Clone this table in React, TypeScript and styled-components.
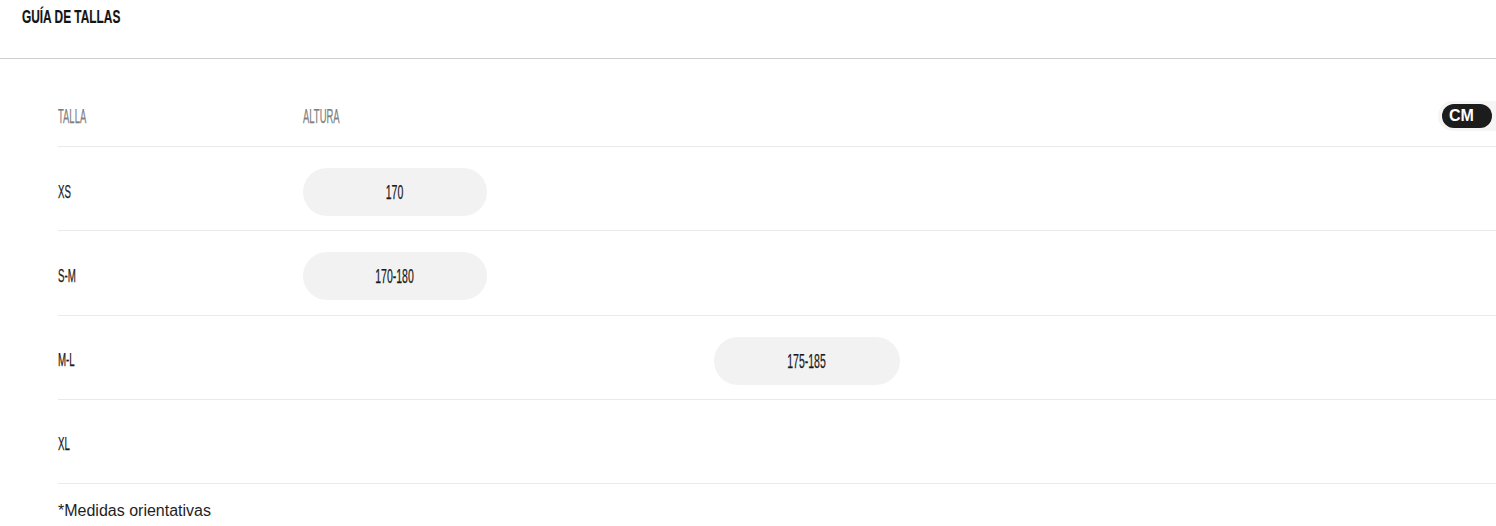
import styled, { createGlobalStyle } from 'styled-components'

const GlobalStyle = createGlobalStyle`
  html, body {
    margin: 0;
    padding: 0;
    background: #ffffff;
  }
  body {
    font-family: "Liberation Sans", Arial, sans-serif;
    color: #1a1a1a;
  }
`

const Page = styled.div`
  width: 1496px;
  display: flex;
  flex-direction: column;
`

const Header = styled.div`
  height: 59px;
  box-sizing: border-box;
  padding: 4px 22px 0;
  border-bottom: 1px solid #cfcfcf;
  display: flex;
  align-items: flex-start;
`

// condensed display face, squeezed from the narrow sans
const Cond = styled.span<{ $origin?: 'left' | 'center'; $scale?: number }>`
  display: inline-block;
  font-family: "Liberation Sans Narrow", "Liberation Sans", Arial, sans-serif;
  white-space: nowrap;
  -webkit-text-stroke: 0.25px currentColor;
  transform: scaleX(${p => p.$scale ?? 0.5});
  transform-origin: ${p => p.$origin ?? 'left'} center;
`

const Title = styled(Cond)`
  font-size: 18px;
  font-weight: 700;
  color: #141414;
  line-height: 26px;
  -webkit-text-stroke: 0.2px currentColor;
`

const Table = styled.div`
  margin-left: 58px;
  padding-top: 33px;
  display: flex;
  flex-direction: column;
`

const Row = styled.div<{ $head?: boolean }>`
  display: grid;
  grid-template-columns: 245px repeat(5, 205.5px) 1fr;
  align-items: center;
  border-bottom: 1px solid #e9e9e9;
  padding: ${p => (p.$head ? '0 0 6px' : '21px 0 14.3px')};
  min-height: 48px;
`

const HeadLabel = styled(Cond)`
  font-size: 21px;
  color: #7e7e7e;
`

const SizeLabel = styled(Cond)`
  font-size: 18px;
  color: #1a1a1a;
`

const Pill = styled.div<{ $col: number; $w?: number }>`
  grid-column: ${p => p.$col + 2} / span 1;
  grid-row: 1;
  width: ${p => p.$w ?? 184}px;
  height: 48px;
  border-radius: 24px;
  background: #f2f2f2;
  display: flex;
  align-items: center;
  justify-content: center;
`

const PillText = styled(Cond)`
  font-size: 21px;
  color: #1a1a1a;
`

const UnitCell = styled.div`
  grid-column: 7;
  grid-row: 1;
  justify-self: end;
`

const UnitToggle = styled.div`
  display: flex;
  background: #f5f5f5;
  border-radius: 16px 0 0 16px;
  padding: 3px 4px 3px 4px;
`

const UnitOption = styled.div<{ $active?: boolean }>`
  height: 24px;
  width: 50px;
  box-sizing: border-box;
  padding-left: 7px;
  border-radius: 12px;
  display: flex;
  align-items: center;
  font-family: "Liberation Sans", Arial, sans-serif;
  font-weight: 700;
  font-size: 16px;
  background: ${p => (p.$active ? '#1c1c1c' : 'transparent')};
  color: ${p => (p.$active ? '#ffffff' : '#1c1c1c')};
`

const Note = styled.div`
  margin-left: 58px;
  padding-top: 18px;
  font-family: "Liberation Sans", Arial, sans-serif;
  font-size: 16px;
  color: #1e1e1e;
`

const rows = [
  { size: 'XS', range: '170', col: 0, w: 184 },
  { size: 'S-M', range: '170-180', col: 0, w: 184 },
  { size: 'M-L', range: '175-185', col: 2, w: 186 },
  { size: 'XL', range: '', col: 0, w: 184 },
]

export default function App() {
  return (
    <Page>
      <GlobalStyle />
      <Header>
        <Title $scale={0.66}>GUÍA DE TALLAS</Title>
      </Header>
      <Table>
        <Row $head>
          <div>
            <HeadLabel $scale={0.45}>TALLA</HeadLabel>
          </div>
          <div>
            <HeadLabel $scale={0.45}>ALTURA</HeadLabel>
          </div>
          <UnitCell>
            <UnitToggle>
              <UnitOption $active>CM</UnitOption>
            </UnitToggle>
          </UnitCell>
        </Row>
        {rows.map(r => (
          <Row key={r.size}>
            <div style={{ gridColumn: 1, gridRow: 1 }}>
              <SizeLabel $scale={0.54}>{r.size}</SizeLabel>
            </div>
            {r.range && (
              <Pill $col={r.col} $w={r.w}>
                <PillText $origin="center" $scale={0.5}>
                  {r.range}
                </PillText>
              </Pill>
            )}
          </Row>
        ))}
      </Table>
      <Note>*Medidas orientativas</Note>
    </Page>
  )
}
